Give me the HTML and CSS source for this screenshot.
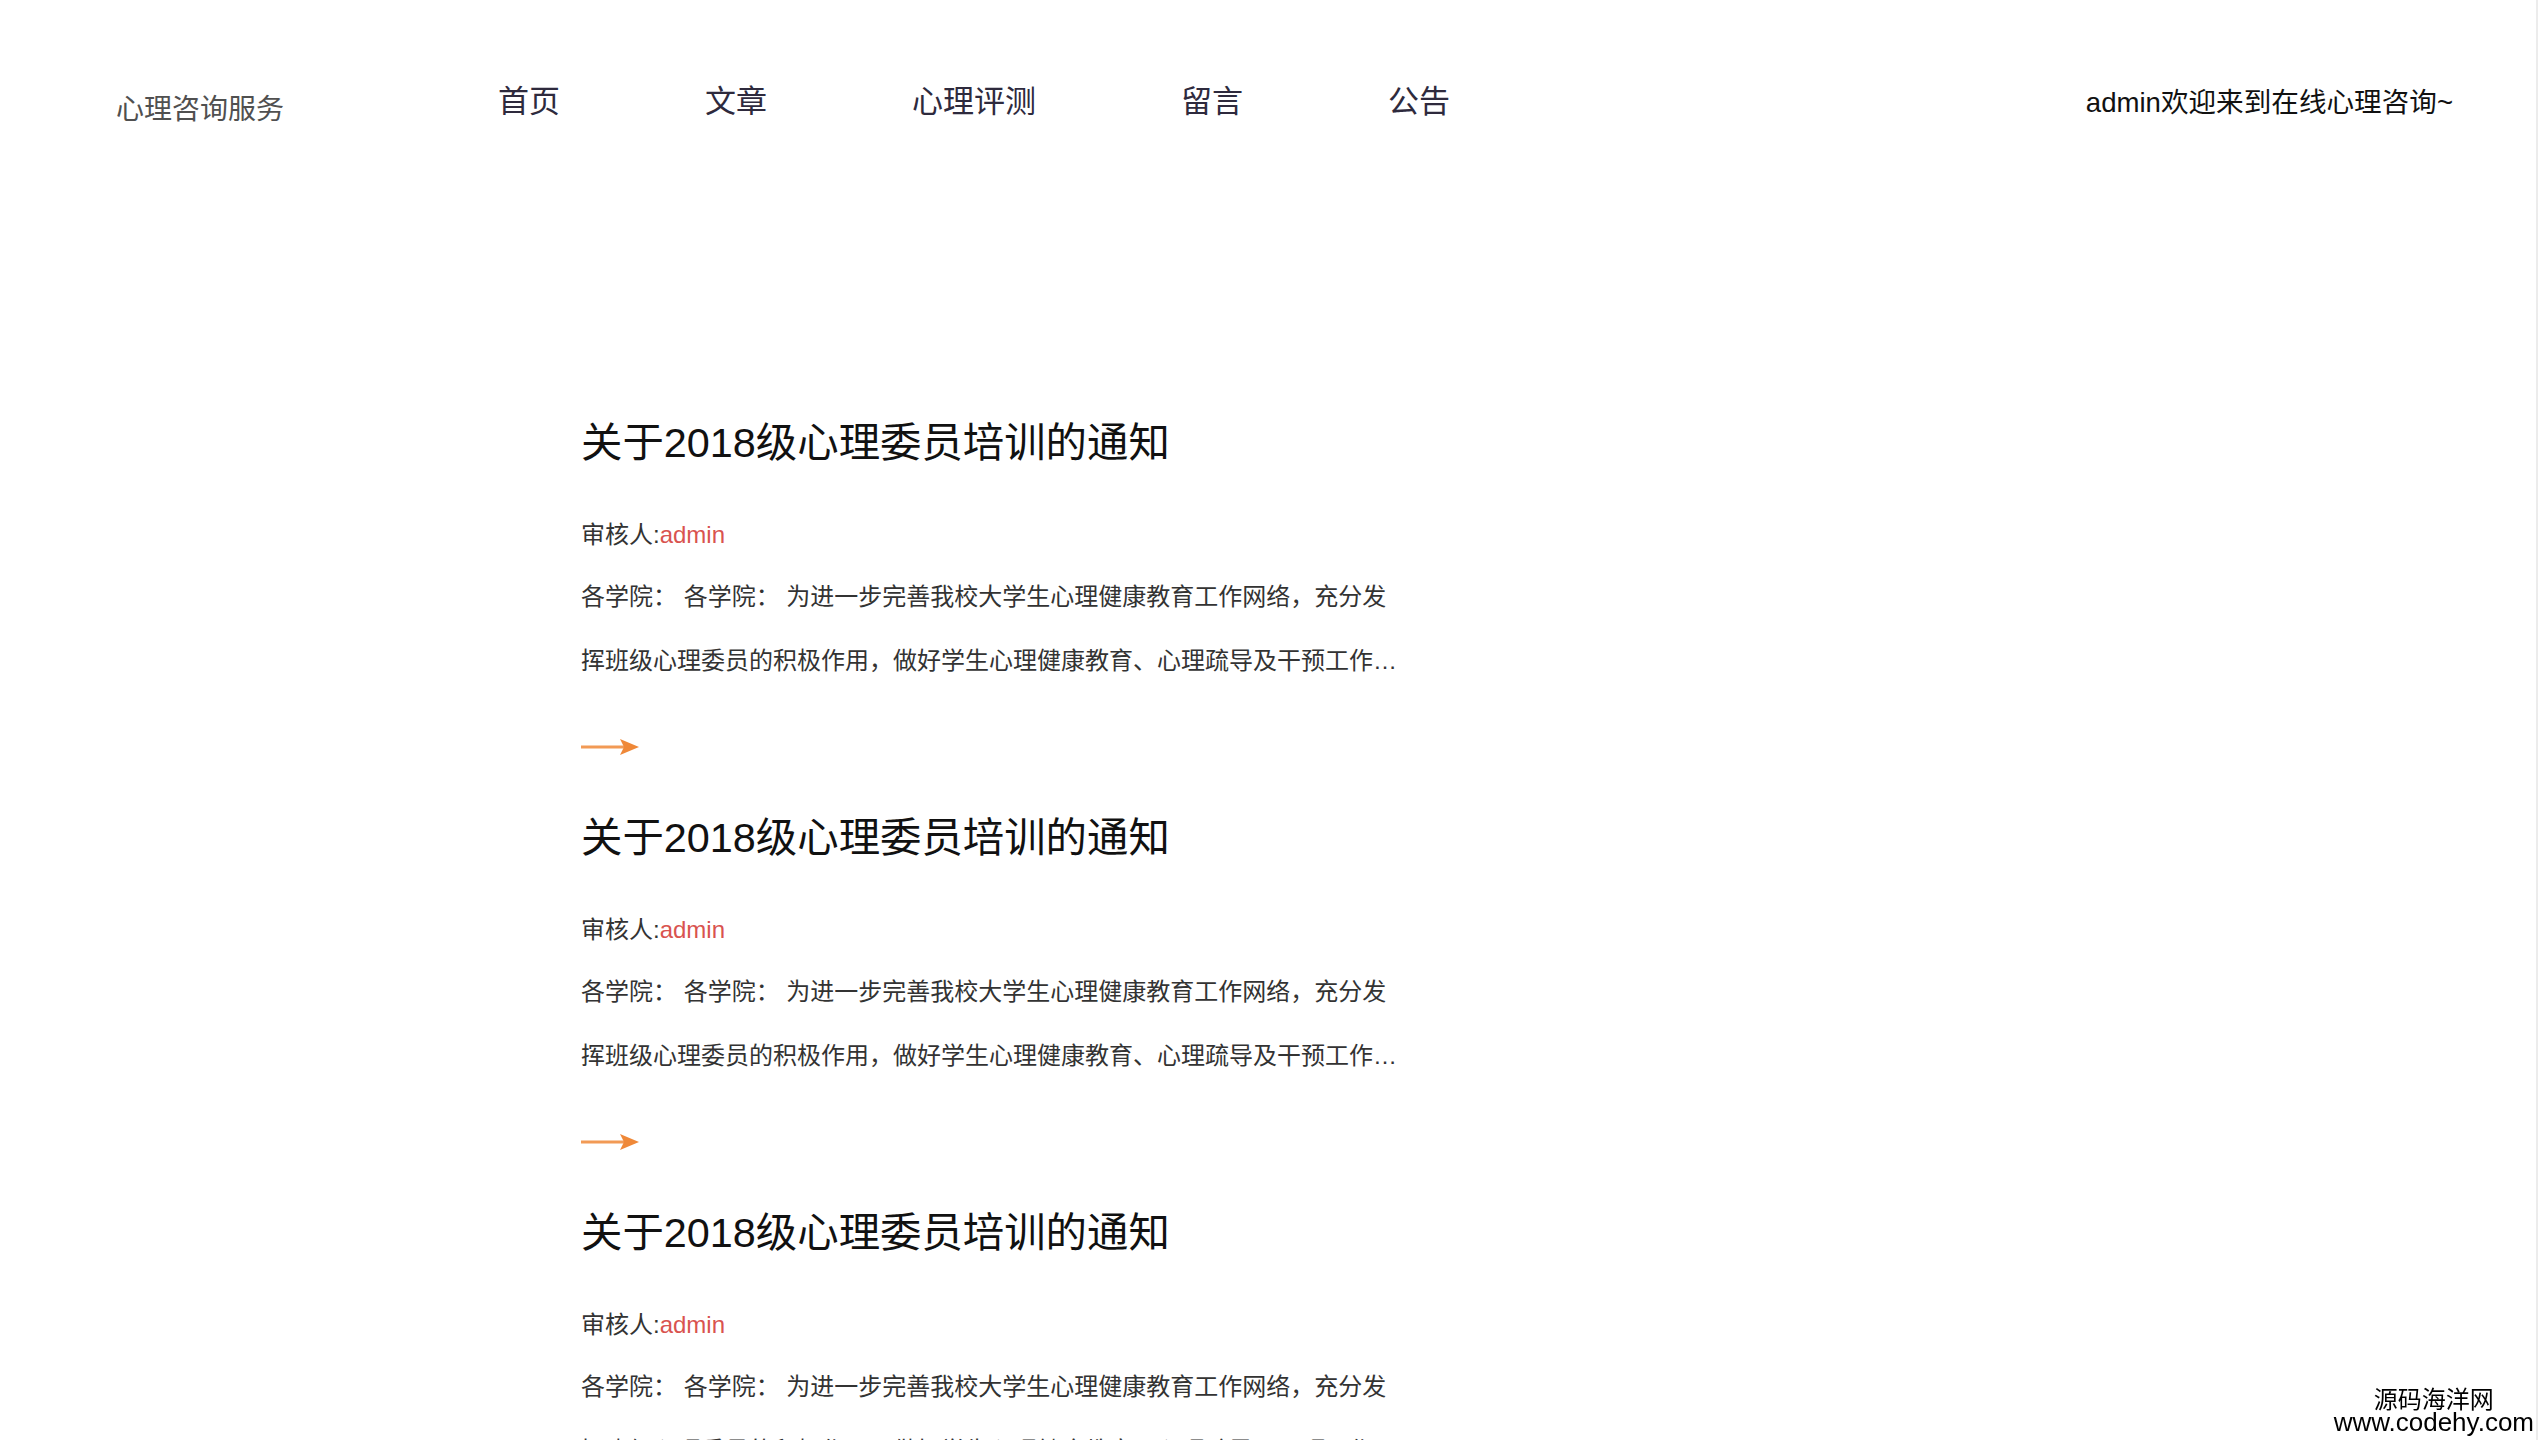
FILE: index.html
```html
<!DOCTYPE html>
<html lang="zh-CN">
<head>
<meta charset="utf-8">
<title>心理咨询服务 - 公告</title>
<link rel="stylesheet" href="styles.css">
</head>
<body>
<header class="topbar">
  <div class="logo">心理咨询服务</div>
  <nav class="nav">
    <a href="#">首页</a>
    <a href="#">文章</a>
    <a href="#">心理评测</a>
    <a href="#">留言</a>
    <a href="#">公告</a>
  </nav>
  <div class="welcome">admin欢迎来到在线心理咨询~</div>
</header>

<main class="notices">
  <article class="notice">
    <h2 class="notice-title">关于2018级心理委员培训的通知</h2>
    <div class="notice-meta">审核人:<span class="author">admin</span></div>
    <p class="notice-body">各学院： 各学院： 为进一步完善我校大学生心理健康教育工作网络，充分发挥班级心理委员的积极作用，做好学生心理健康教育、心理疏导及干预工作，现将有关事项通知如下：</p>
    <a class="more" href="#"><svg width="58" height="20" viewBox="0 0 58 20"><line x1="0" y1="10" x2="46" y2="10" stroke="#f29a55" stroke-width="3"/><path d="M39 2 L58 10 L39 18 L43 10 Z" fill="#ef8838"/></svg></a>
  </article>
  <article class="notice">
    <h2 class="notice-title">关于2018级心理委员培训的通知</h2>
    <div class="notice-meta">审核人:<span class="author">admin</span></div>
    <p class="notice-body">各学院： 各学院： 为进一步完善我校大学生心理健康教育工作网络，充分发挥班级心理委员的积极作用，做好学生心理健康教育、心理疏导及干预工作，现将有关事项通知如下：</p>
    <a class="more" href="#"><svg width="58" height="20" viewBox="0 0 58 20"><line x1="0" y1="10" x2="46" y2="10" stroke="#f29a55" stroke-width="3"/><path d="M39 2 L58 10 L39 18 L43 10 Z" fill="#ef8838"/></svg></a>
  </article>
  <article class="notice">
    <h2 class="notice-title">关于2018级心理委员培训的通知</h2>
    <div class="notice-meta">审核人:<span class="author">admin</span></div>
    <p class="notice-body">各学院： 各学院： 为进一步完善我校大学生心理健康教育工作网络，充分发挥班级心理委员的积极作用，做好学生心理健康教育、心理疏导及干预工作，现将有关事项通知如下：</p>
    <a class="more" href="#"><svg width="58" height="20" viewBox="0 0 58 20"><line x1="0" y1="10" x2="46" y2="10" stroke="#f29a55" stroke-width="3"/><path d="M39 2 L58 10 L39 18 L43 10 Z" fill="#ef8838"/></svg></a>
  </article>
</main>

<div class="edge-line"></div>
<div class="watermark">
  <div class="wm-cn">源码海洋网</div>
  <div class="wm-url">www.codehy.com</div>
</div>
</body>
</html>
```

FILE: styles.css
```css
html, body {
  margin: 0;
  padding: 0;
  background: #ffffff;
}

body {
  font-family: "Liberation Sans", "Noto Sans CJK SC", sans-serif;
  color: #333;
  overflow-x: hidden;
}

a {
  text-decoration: none;
  color: inherit;
}

.topbar {
  display: flex;
  align-items: flex-start;
  padding: 82px 86px 0 116px;
}

.logo {
  font-size: 28px;
  line-height: 24px;
  margin-top: 16px;
  color: #505050;
  width: 382px;
}

.nav {
  display: flex;
  gap: 145px;
  flex: 1;
}

.nav a {
  font-size: 31px;
  line-height: 40px;
  color: #2e2a3d;
}

.welcome {
  font-size: 27.6px;
  line-height: 40px;
  margin-top: 1px;
  color: #111;
}

.notices {
  padding: 295px 0 0 581px;
}

.notice {
  display: flex;
  flex-direction: column;
  align-items: flex-start;
  padding-bottom: 56px;
}

.notice-title {
  margin: 0;
  font-weight: normal;
  font-size: 41.4px;
  line-height: 50px;
  color: #111;
}

.notice-meta {
  margin-top: 51px;
  font-size: 24px;
  line-height: 32px;
  color: #333;
}

.author {
  color: #d9534f;
}

.notice-body {
  margin: 14px 0 0;
  width: 822px;
  font-size: 24px;
  line-height: 64px;
  color: #333;
  display: -webkit-box;
  -webkit-box-orient: vertical;
  -webkit-line-clamp: 2;
  overflow: hidden;
}

.more {
  margin-top: 44px;
  display: block;
  height: 20px;
}

.more svg {
  display: block;
}

.edge-line {
  position: fixed;
  top: 0;
  bottom: 0;
  right: 1px;
  width: 2px;
  background: #ececec;
}

.watermark {
  position: fixed;
  right: 5px;
  bottom: 6px;
  text-align: center;
  color: #000;
}

.wm-cn {
  font-family: "Noto Sans CJK SC", sans-serif;
  font-size: 24px;
  line-height: 24px;
}

.wm-url {
  font-family: "Liberation Sans", sans-serif;
  font-size: 26px;
  line-height: 24px;
}
```
